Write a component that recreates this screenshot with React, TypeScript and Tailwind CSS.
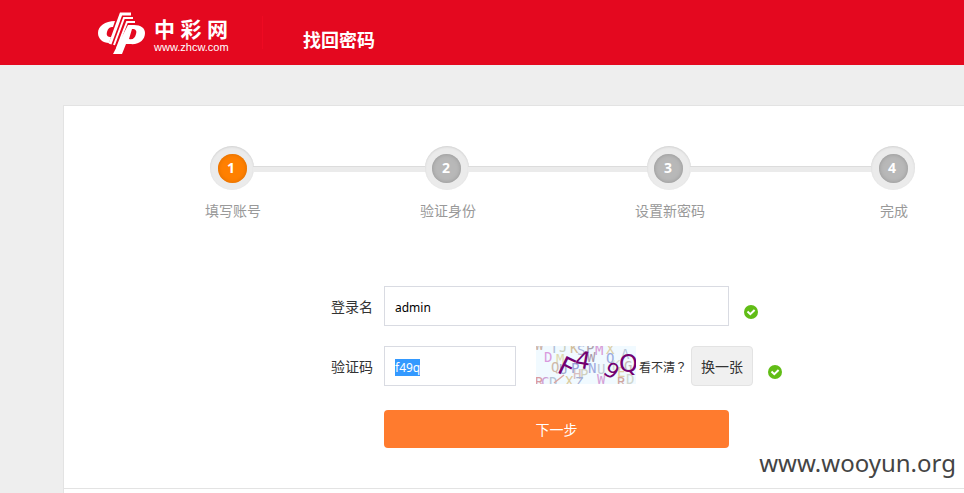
import { useEffect, useRef, useState } from "react";

const steps = [
  { label: "填写账号", line: "" },
  { label: "验证身份", line: "grow-[171]" },
  { label: "设置新密码", line: "grow-[178]" },
  { label: "完成", line: "grow-[180]" },
];

type Noise = { t: string; x: number; y: number; c: string };

const noise: Noise[] = [
  { t: "W", x: -1, y: 4, c: "#cbb3a6" },
  { t: "T", x: 14, y: 7, c: "#b3bfd6" },
  { t: "J", x: 23, y: 6, c: "#c9cfc0" },
  { t: "K", x: 34, y: 7, c: "#d3bd9b" },
  { t: "S", x: 41, y: 9, c: "#a6b2da" },
  { t: "P", x: 50, y: 7, c: "#aca2ac" },
  { t: "M", x: 59, y: 9, c: "#d89ad6" },
  { t: "X", x: 70, y: 8, c: "#ddd0a8" },
  { t: "A", x: 85, y: 13, c: "#b6c5d9" },
  { t: "D", x: 8, y: 16, c: "#d99add" },
  { t: "M", x: 20, y: 18, c: "#ded9b0" },
  { t: "W", x: 51, y: 16, c: "#a99baa" },
  { t: "Q", x: 70, y: 17, c: "#9aabdf" },
  { t: "Q", x: 15, y: 26, c: "#ceb9aa" },
  { t: "U", x: 23, y: 28, c: "#a0aad0" },
  { t: "P", x: 35, y: 27, c: "#98a2dc" },
  { t: "N", x: 52, y: 27, c: "#9da8dd" },
  { t: "U", x: 61, y: 28, c: "#c1cbd6" },
  { t: "K", x: 76, y: 24, c: "#d5dbd2" },
  { t: "G", x: 88, y: 25, c: "#c7b7b4" },
  { t: "H", x: 37, y: 33, c: "#d9bfc0" },
  { t: "P", x: 44, y: 33, c: "#d0d0bf" },
  { t: "E", x: 81, y: 31, c: "#e0cda4" },
  { t: "R", x: -1, y: 41, c: "#d99ba0" },
  { t: "C", x: 5, y: 41, c: "#cda0d3" },
  { t: "D", x: 13, y: 41, c: "#b4c4d6" },
  { t: "X", x: 29, y: 40, c: "#dccb9d" },
  { t: "Z", x: 39, y: 41, c: "#a4afd3" },
  { t: "W", x: 61, y: 38, c: "#d5a0d6" },
  { t: "R", x: 81, y: 41, c: "#cfa59e" },
  { t: "D", x: 90, y: 38, c: "#cfd6ce" },
];

function Captcha() {
  return (
    <svg
      width="100"
      height="38"
      viewBox="0 0 100 38"
      role="img"
      aria-label="验证码图片"
      className="shrink-0 self-start bg-[#f1faff]"
    >
      <g fontFamily="DejaVu Sans Mono, monospace" fontSize="14">
        {noise.map((n, i) => (
          <text key={i} x={n.x} y={n.y} fill={n.c}>
            {n.t}
          </text>
        ))}
      </g>
      <path d="M18 37L28 29" stroke="#dba5a0" strokeWidth="1.5" />
      <g fontFamily="DejaVu Sans, sans-serif" fill="#730070">
        <text fontSize="26" transform="translate(20 26) rotate(26)">F</text>
        <text fontSize="24" transform="translate(38 21) rotate(10)">4</text>
        <text fontSize="21" transform="translate(66 27) rotate(34)">9</text>
        <text fontSize="24" x="83" y="26">Q</text>
      </g>
    </svg>
  );
}

function Logo() {
  return (
    <div className="flex items-center gap-2">
      <svg width="49" height="44" viewBox="0 0 49 44" fill="none" aria-hidden="true">
        <path
          d="M18 10C8 10 1 15 1 22c0 6 5 10 11 10l2-6c-3 0-5-1-4-5 1-4 3-5 6-5z"
          fill="white"
        />
        <path d="M13 33L24 3h10" stroke="white" strokeWidth="3" />
        <path d="M17 34L27 7h9" stroke="white" strokeWidth="2" />
        <path d="M20 37L30 11h8" stroke="white" strokeWidth="2" />
        <path
          d="M31 14h6c7 0 11 3 11 8 0 7-6 12-15 11h-4l-4 10h-9zM35 18l-3 10c4 1 6-1 7-5 1-3 0-5-4-5z"
          fill="white"
          fillRule="evenodd"
        />
      </svg>
      <div className="flex w-[74px] flex-col pt-1 text-white">
        <div className="flex justify-between text-[21px] leading-6 font-bold">
          <span>中</span>
          <span>彩</span>
          <span>网</span>
        </div>
        <span className="font-['Liberation_Sans',sans-serif] text-[11px] leading-3">www.zhcw.com</span>
      </div>
    </div>
  );
}

function Check() {
  return (
    <svg
      width="14"
      height="14"
      viewBox="0 0 14 14"
      className="mb-[7px] shrink-0 self-end"
      role="img"
      aria-label="正确"
    >
      <circle cx="7" cy="7" r="7" fill="#61bd16" />
      <path d="M3.5 6.5L6.3 9.2L10.6 5" fill="none" stroke="white" strokeWidth="2" />
    </svg>
  );
}

function Steps() {
  return (
    <ol className="flex pt-10 pr-[49px] pl-[146px]">
      {steps.map((step, i) => (
        <li key={step.label} className={`flex ${i ? step.line : ""}`}>
          {i > 0 && (
            <span className="-mx-px mt-[20px] h-[6px] grow border-t border-[#dcdcdc] bg-[#ebebeb]" />
          )}
          <div className="flex w-11 flex-col items-center">
            <span className="flex size-11 items-center justify-center rounded-full bg-[#ebebeb] shadow-[inset_0_1px_2px_#d2d2d2]">
              <span
                className={`flex size-[29px] items-center justify-center rounded-full pr-0.5 text-sm font-bold text-white ${
                  i === 0
                    ? "bg-[#ff8000] shadow-[inset_0_0_4px_#d96c00]"
                    : "bg-[#b8b8b8] shadow-[inset_0_0_4px_#949494]"
                }`}
              >
                {i + 1}
              </span>
            </span>
            <span className="mt-[11px] pl-0.5 text-sm leading-5 whitespace-nowrap text-[#999]">
              {step.label}
            </span>
          </div>
        </li>
      ))}
    </ol>
  );
}

export default function App() {
  const [name, setName] = useState("admin");
  const [code, setCode] = useState("f49q");
  const codeRef = useRef<HTMLInputElement>(null);

  useEffect(() => {
    codeRef.current?.focus();
    codeRef.current?.select();
  }, []);

  return (
    <div className="relative flex min-h-screen flex-col overflow-hidden bg-[#eee] font-['Noto_Sans','Noto_Sans_CJK_SC',sans-serif] text-[#333]">
      <header className="flex h-[65px] shrink-0 bg-[#e4081f] pl-[97px]">
        <Logo />
        <span className="my-4 ml-[34px] w-px bg-[#ee0a22]" />
        <h1 className="ml-10 pt-[26px] text-lg leading-7 font-bold text-white">找回密码</h1>
      </header>

      <main className="mt-10 ml-[63px] flex grow flex-col border-t border-l border-[#e3e3e3] bg-white">
        <Steps />

        <form
          className="mt-[65px] flex flex-col gap-5 pl-[257px] text-sm"
          onSubmit={(e) => e.preventDefault()}
        >
          <div className="flex h-10 items-center">
            <label htmlFor="name" className="w-[63px] shrink-0 pt-0.5 pl-[10px]">
              登录名
            </label>
            <input
              id="name"
              value={name}
              onChange={(e) => setName(e.target.value)}
              className="h-10 w-[345px] border border-[#d9dbe2] px-[10px] pt-0.5 text-xs text-black outline-none"
            />
            <span className="w-[15px]" />
            <Check />
          </div>

          <div className="flex h-10 items-center">
            <label htmlFor="code" className="w-[63px] shrink-0 pt-0.5 pl-[10px]">
              验证码
            </label>
            <input
              id="code"
              ref={codeRef}
              value={code}
              onChange={(e) => setCode(e.target.value)}
              className="mr-5 h-10 w-[132px] border border-[#d9dbe2] px-[10px] pt-0.5 text-xs text-black outline-none selection:bg-[#3399ff] selection:text-white"
            />
            <Captcha />
            <span className="ml-[3px] w-[52px] shrink-0 pt-0.5 font-['Noto_Sans_CJK_TC',sans-serif] text-xs">
              看不清？
            </span>
            <button
              type="button"
              className="mr-[15px] h-10 w-[62px] rounded border border-[#e3e3e3] bg-[#f0f0f0] pt-0.5"
            >
              换一张
            </button>
            <Check />
          </div>

          <button
            type="submit"
            className="mt-1 ml-[63px] h-[38px] w-[345px] rounded bg-[#ff7b2e] pt-0.5 text-white"
          >
            下一步
          </button>
        </form>

        <div className="mt-10 border-t border-[#e3e3e3]" />
      </main>

      <span className="absolute right-2 bottom-3.5 text-2xl leading-8 text-[#444]">www.wooyun.org</span>
    </div>
  );
}
